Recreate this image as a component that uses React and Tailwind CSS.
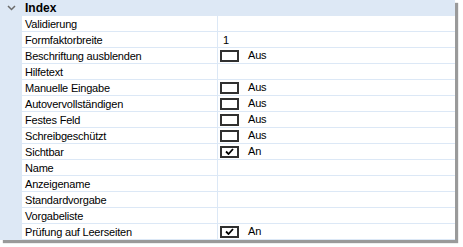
const rows = [
  { label: 'Validierung' },
  { label: 'Formfaktorbreite', value: '1' },
  { label: 'Beschriftung ausblenden', check: false },
  { label: 'Hilfetext' },
  { label: 'Manuelle Eingabe', check: false },
  { label: 'Autovervollständigen', check: false },
  { label: 'Festes Feld', check: false },
  { label: 'Schreibgeschützt', check: false },
  { label: 'Sichtbar', check: true },
  { label: 'Name' },
  { label: 'Anzeigename' },
  { label: 'Standardvorgabe' },
  { label: 'Vorgabeliste' },
  { label: 'Prüfung auf Leerseiten', check: true },
];

const CheckBox = ({ on }) => (
  <div className="flex items-center">
    <div className="w-[19px] h-[12px] border-2 border-[#303030] bg-white flex items-center justify-center">
      {on && (
        <svg width="9" height="7" viewBox="0 0 9 7">
          <path d="M1 3.5 L3.5 6 L8 1" stroke="#000" strokeWidth="1.8" fill="none" />
        </svg>
      )}
    </div>
    <span className="ml-[9px]">{on ? 'An' : 'Aus'}</span>
  </div>
);

export default function App() {
  return (
    <div className="w-[463px] h-[247px] bg-white" style={{ fontFamily: '"Liberation Sans", Arial, sans-serif' }}>
      <div className="w-[455px] bg-white shadow-[3px_3px_1px_#9a9a9a] text-[11px] text-black tracking-[-0.2px]">
        <div className="h-[16px] bg-[#dde8f5] flex items-center">
          <div className="w-[22px] flex justify-center">
            <svg width="9" height="6" viewBox="0 0 9 6">
              <path d="M1 1 L4.5 4.5 L8 1" stroke="#6b6b6b" strokeWidth="1.5" fill="none" />
            </svg>
          </div>
          <span className="ml-[3px] font-bold text-[12px] tracking-normal">Index</span>
        </div>
        <div className="flex">
          <div className="w-[22px] bg-[#dde8f5]" />
          <div className="flex-1">
            {rows.map((r, i) => (
              <div key={i} className="h-[16px] flex border-b border-[#dce8f6]">
                <div className="w-[196px] pl-[3px] pt-px flex items-center border-r border-[#dce8f6] whitespace-nowrap">{r.label}</div>
                <div className="flex-1 pl-[2px] flex items-center">
                  {r.value && <span className="ml-[3px] pt-px">{r.value}</span>}
                  {r.check !== undefined && <CheckBox on={r.check} />}
                </div>
              </div>
            ))}
          </div>
        </div>
      </div>
    </div>
  );
}
